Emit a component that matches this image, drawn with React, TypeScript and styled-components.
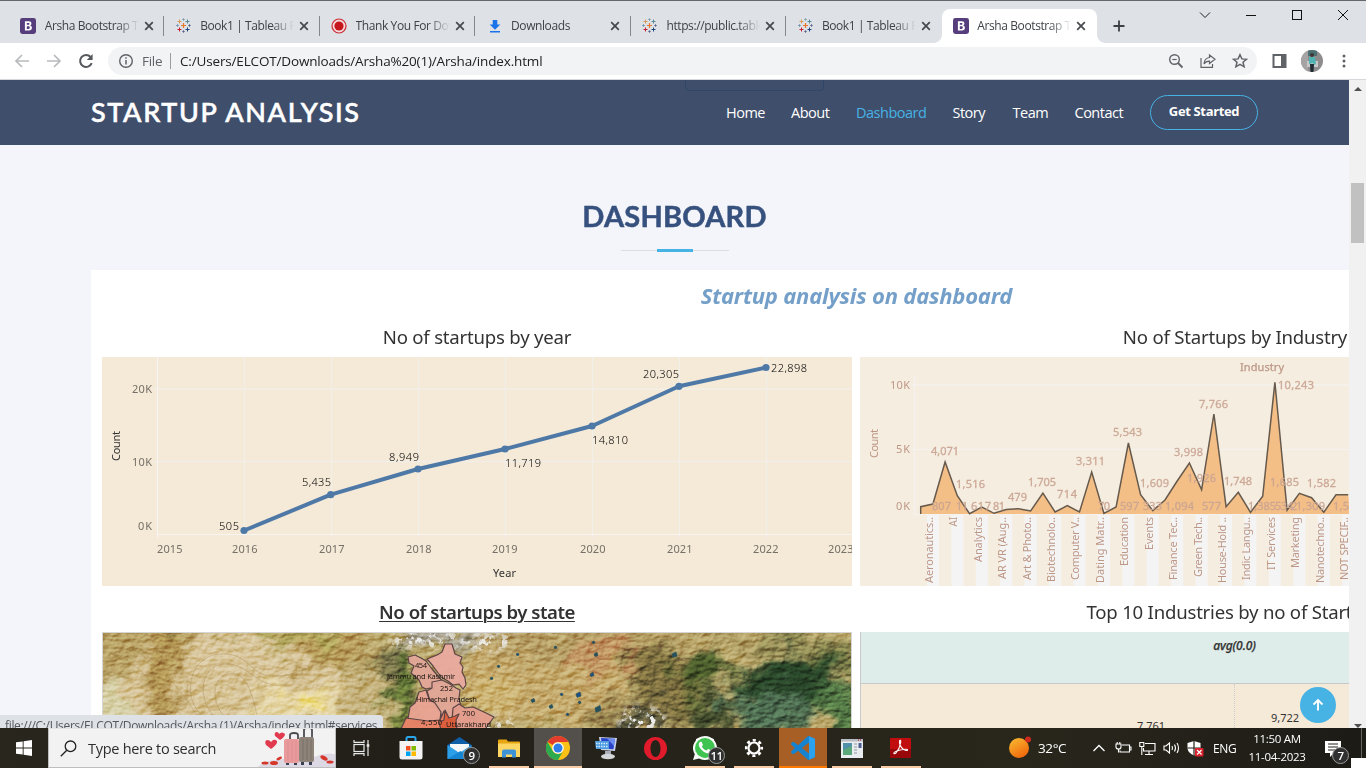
import React from "react";
import styled, { createGlobalStyle } from "styled-components";
import { FaWhatsapp } from "react-icons/fa";

const UI = `"Open Sans", "Noto Sans", sans-serif`;
const TAB = `"Noto Sans", "Open Sans", sans-serif`;

const Global = createGlobalStyle`
  * { box-sizing: border-box; }
  body { margin: 0; background: #fff; font-family: ${UI}; overflow: hidden; }
  svg { display: block; flex: none; }
`;

const Screen = styled.div`
  width: 1366px;
  height: 768px;
  display: flex;
  flex-direction: column;
  overflow: hidden;
`;

/* ---------- browser chrome ---------- */

const TabStrip = styled.div`
  height: 43px;
  flex: none;
  display: flex;
  align-items: flex-end;
  background: #dee1e6;
  border-top: 1px solid #66676a;
  padding-left: 9px;
`;

const Tab = styled.div<{ $active?: boolean; $line?: boolean }>`
  position: relative;
  width: 155.45px;
  height: 34px;
  display: flex;
  align-items: center;
  padding: 0 10px 0 11.4px;
  border-radius: 8px 8px 0 0;
  background: ${(p) => (p.$active ? "#fff" : "transparent")};
  &::after {
    content: "";
    position: absolute;
    right: 0;
    top: 7px;
    width: 1px;
    height: 20px;
    background: ${(p) => (p.$line ? "#84878b" : "transparent")};
  }
`;

const TabTitle = styled.span`
  width: 95px;
  margin: 0 4px 0 8.3px;
  overflow: hidden;
  white-space: nowrap;
  font-size: 12px;
  line-height: 18px;
  letter-spacing: -0.4px;
  color: #3f4246;
  mask-image: linear-gradient(90deg, #000 72px, transparent 94px);
`;

const TabFoot = styled.i<{ $side: "left" | "right" }>`
  position: absolute;
  bottom: 0;
  ${(p) => p.$side}: -8px;
  width: 8px;
  height: 8px;
  background: radial-gradient(circle at ${(p) => (p.$side === "left" ? "0 0" : "100% 0")}, transparent 7.5px, #fff 8px);
`;

const NewTab = styled.div`
  height: 34px;
  margin-left: 16px;
  display: flex;
  align-items: center;
`;

const WindowButtons = styled.div`
  margin-left: auto;
  align-self: flex-start;
  display: flex;
  align-items: center;
  height: 28px;
  gap: 34px;
  padding-right: 17px;
`;

const Toolbar = styled.div`
  height: 37px;
  flex: none;
  display: flex;
  align-items: center;
  background: #fff;
  border-bottom: 1px solid #d6d8db;
  padding: 0 14px;
`;

const NavButtons = styled.div`
  display: flex;
  gap: 16px;
  margin-right: 14px;
`;

const Omnibox = styled.div`
  width: 1150px;
  height: 28px;
  border-radius: 14px;
  background: #f1f3f4;
  display: flex;
  align-items: center;
  padding: 0 9px 0 10px;
`;

const UrlScheme = styled.span`
  margin-left: 8px;
  padding-right: 8px;
  width: 29px;
  font-size: 13.5px;
  line-height: 16px;
  color: #5f6368;
  white-space: nowrap;
  letter-spacing: -0.3px;
  border-right: 1px solid #9a9da1;
`;

const Url = styled.span`
  margin-left: 9px;
  font-size: 13.5px;
  line-height: 18px;
  letter-spacing: -0.16px;
  color: #202124;
  white-space: nowrap;
`;

const OmniActions = styled.div`
  margin-left: auto;
  display: flex;
  align-items: center;
  gap: 16px;
`;

const BarActions = styled.div`
  display: flex;
  align-items: center;
  margin-left: 15px;
`;

const Avatar = styled.div`
  width: 22px;
  height: 22px;
  margin: 0 13.5px;
  border-radius: 50%;
  overflow: hidden;
`;

/* ---------- page ---------- */

const Viewport = styled.div`
  position: relative;
  height: 648px;
  flex: none;
  display: flex;
`;

const Page = styled.div`
  width: 1349px;
  height: 648px;
  flex: none;
  overflow: hidden;
  background: #f3f5fa;
  display: flex;
  flex-direction: column;
`;

const Header = styled.header`
  position: relative;
  height: 65px;
  flex: none;
  display: flex;
  align-items: center;
  justify-content: space-between;
  background: #3f4e6b;
  padding: 0 91px;
`;

const GhostButton = styled.div`
  position: absolute;
  left: 685px;
  top: -20px;
  width: 139px;
  height: 31px;
  border: 1px solid #2f4668;
  border-radius: 4px;
  clip-path: inset(20px 0 0 0);
`;

const Brand = styled.h1`
  margin: 0;
  padding-bottom: 2px;
  font: 500 27px/35px Lato, sans-serif;
  -webkit-text-stroke: 0.6px #fff;
  letter-spacing: 1.65px;
  color: #fff;
  white-space: nowrap;
`;

const Nav = styled.nav`
  display: flex;
  align-items: center;
`;

const NavLink = styled.a<{ $active?: boolean; $w: number }>`
  width: ${(p) => p.$w}px;
  margin-right: 26.5px;
  font-size: 14.5px;
  line-height: 20px;
  font-weight: 500;
  letter-spacing: -0.5px;
  white-space: nowrap;
  color: ${(p) => (p.$active ? "#47b2e4" : "#fff")};
`;

const StartButton = styled.a`
  width: 108px;
  height: 35px;
  display: flex;
  justify-content: center;
  padding-top: 5px;
  border: 1px solid #47b2e4;
  border-radius: 18px;
  color: #fff;
  font-size: 13px;
  line-height: 20px;
  font-weight: 700;
  letter-spacing: -0.35px;
  white-space: nowrap;
`;

const SectionTitle = styled.div`
  height: 125px;
  flex: none;
  display: flex;
  flex-direction: column;
  align-items: center;
  padding-top: 51px;
`;

const SectionHeading = styled.h2`
  margin: 0;
  font: 700 29px/40px Lato, sans-serif;
  -webkit-text-stroke: 0.5px #37517e;
  letter-spacing: 0.2px;
  color: #37517e;
`;

const Rule = styled.div`
  width: 108px;
  height: 3px;
  margin-top: 13px;
  display: flex;
  justify-content: center;
  background: linear-gradient(#ddd, #ddd) 0 1px / 100% 1px no-repeat;
  &::after {
    content: "";
    width: 36px;
    height: 3px;
    background: #47b2e4;
  }
`;

const Embed = styled.div`
  width: 1532px;
  margin-left: 91px;
  padding: 0 12px 0 11px;
  background: #fff;
  flex: 1;
  font-family: ${TAB};
`;

const EmbedTitle = styled.h3`
  margin: 0;
  height: 52px;
  text-align: center;
  font: italic 700 22px/51px ${TAB};
  letter-spacing: -0.2px;
  color: #739fc8;
`;

const Sheets = styled.div`
  display: grid;
  grid-template-columns: 750px 750px;
  column-gap: 8px;
`;

const SheetTitle = styled.h4<{ $tall?: boolean; $strong?: boolean }>`
  margin: 0;
  height: ${(p) => (p.$tall ? 46 : 35)}px;
  text-align: center;
  font-family: ${TAB};
  font-size: 18.6px;
  line-height: ${(p) => (p.$tall ? 52 : 29)}px;
  font-weight: ${(p) => (p.$strong ? 600 : 400)};
  letter-spacing: ${(p) => (p.$strong ? -0.5 : -0.22)}px;
  text-decoration: ${(p) => (p.$strong ? "underline" : "none")};
  text-underline-offset: 2px;
  text-decoration-thickness: 1px;
  color: #333;
  white-space: nowrap;
`;

const MapFrame = styled.div`
  height: 96px;
  border: 1px solid #d5d5d5;
  border-bottom: 0;
  overflow: hidden;
`;

const Table = styled.div`
  height: 96px;
  border-left: 1px solid #c9c9c9;
  background: #f5e9d7;
`;

const TableHead = styled.div`
  height: 52px;
  background: #dfedea;
  border-bottom: 1px solid #c5c9c8;
  text-align: center;
  font: italic 500 12px/28px ${TAB};
  -webkit-text-stroke: 0.25px #333;
  letter-spacing: -0.1px;
  padding-right: 2px;
  color: #333;
`;

const TableBody = styled.div`
  display: grid;
  grid-template-columns: 373px 1fr;
  font-size: 11px;
  line-height: 14px;
  color: #333;
`;

const Cell = styled.div<{ $top: number; $left: number }>`
  height: 44px;
  padding: ${(p) => p.$top}px 0 0 ${(p) => p.$left}px;
  overflow: hidden;
  & + & {
    border-left: 1px dotted #ccc;
  }
`;

const BackToTop = styled.a`
  position: absolute;
  left: 1300px;
  top: 607px;
  width: 36px;
  height: 36px;
  border-radius: 50%;
  background: #47b2e4;
  display: flex;
  align-items: center;
  justify-content: center;
`;

const StatusBubble = styled.div`
  position: absolute;
  left: 0;
  bottom: 0;
  width: 383px;
  height: 13px;
  overflow: hidden;
  padding-left: 5px;
  background: #dee1e6;
  border-top-right-radius: 4px;
  font-size: 12px;
  line-height: 22px;
  letter-spacing: -0.33px;
  white-space: nowrap;
  color: #55585c;
`;

const Scrollbar = styled.div`
  width: 17px;
  height: 648px;
  background: #f1f1f1;
  display: flex;
  flex-direction: column;
  align-items: center;
  padding: 7px 0 0;
`;

const Thumb = styled.div`
  width: 13px;
  height: 61px;
  margin: 92px 0 481px;
  background: #c1c1c1;
`;

const Arrow = styled.i<{ $down?: boolean }>`
  border: 4px solid transparent;
  border-top: ${(p) => (p.$down ? "4px solid #505050" : "0")};
  border-bottom: ${(p) => (p.$down ? "0" : "4px solid #505050")};
`;

/* ---------- taskbar ---------- */

const Taskbar = styled.div`
  position: relative;
  height: 40px;
  flex: none;
  display: flex;
  color: #fff;
  background: linear-gradient(90deg, #29261e, #211f18 30%, #27241b 55%, #29271c 75%, #1d1b16);
`;

const StartCell = styled.div`
  width: 48px;
  display: flex;
  align-items: center;
  justify-content: center;
`;

const Search = styled.div`
  width: 288px;
  height: 40px;
  display: flex;
  align-items: center;
  background: #f2f2f2;
  border: 1px solid #bdbdbd;
  border-top-color: #e4e4e4;
  padding-left: 11px;
  overflow: hidden;
`;

const SearchText = styled.span`
  width: 170px;
  flex: none;
  margin-left: 11px;
  font-size: 14.5px;
  letter-spacing: -0.28px;
  white-space: nowrap;
  color: #2e2e2e;
`;

const App49 = styled.div<{ $bg?: string; $bar?: string; $full?: boolean; $wide?: boolean }>`
  position: relative;
  width: ${(p) => (p.$wide ? 50 : 49)}px;
  height: 40px;
  display: flex;
  align-items: center;
  justify-content: center;
  background: ${(p) => (p.$bg ? `linear-gradient(${p.$bg}, ${p.$bg}) center / 48px 100% no-repeat` : "none")};
  &::after {
    content: "";
    position: absolute;
    bottom: 0;
    left: ${(p) => (p.$full ? 1 : 5)}px;
    right: ${(p) => (p.$full ? 0 : 4)}px;
    height: 2px;
    background: ${(p) => p.$bar || "transparent"};
  }
`;

const Badge = styled.span<{ $x: number; $y: number }>`
  position: absolute;
  left: ${(p) => p.$x}px;
  top: ${(p) => p.$y}px;
  width: 17px;
  height: 17px;
  border-radius: 50%;
  border: 1px solid #9a9a9a;
  background: #303030;
  font-size: 11.5px;
  font-weight: 600;
  line-height: 15px;
  text-align: center;
  letter-spacing: -0.5px;
  color: #fff;
`;

const Tray = styled.div`
  margin-left: auto;
  display: flex;
  align-items: center;
  padding-right: 25px;
`;

const TrayText = styled.span<{ $w: number; $ml: number; $size: number }>`
  width: ${(p) => p.$w}px;
  margin-left: ${(p) => p.$ml}px;
  font-size: ${(p) => p.$size}px;
  letter-spacing: -0.4px;
  white-space: nowrap;
`;

const TrayIcon = styled.span<{ $ml: number }>`
  margin-left: ${(p) => p.$ml}px;
  position: relative;
`;

const Clock = styled.div`
  width: 60px;
  margin-left: 10px;
  text-align: center;
  font-size: 11.5px;
  line-height: 18px;
  letter-spacing: -0.3px;
  white-space: nowrap;
`;

const DesktopPeek = styled.div`
  position: absolute;
  right: 0;
  bottom: 0;
  width: 15px;
  height: 10px;
  background: #fff;
`;

const PeekLine = styled.i`
  position: absolute;
  right: 4px;
  top: 0;
  width: 1px;
  height: 30px;
  background: #66645e;
`;

/* ---------- small drawings ---------- */

const BootstrapIcon = () => (
  <svg width="16" height="16" viewBox="0 0 16 16">
    <rect width="16" height="16" rx="2.4" fill="#563d7c" />
    <path d="M4.900 3.300h3.900c1.700 0 2.600.8 2.600 2.200 0 1-.5 1.700-1.400 2 1.200.2 1.900 1 1.900 2.200 0 1.800-1.100 2.800-3 2.800H4.900z M6.800 4.900v1.900h1.500c.8 0 1.200-.3 1.200-.95s-.4-.95-1.200-.95z M6.800 8.300v2.600h1.700c.9 0 1.300-.4 1.300-1.300s-.5-1.300-1.400-1.300z" fill="#fff" fillRule="evenodd" />
  </svg>
);

const Plus = ({ x, y, r, c, w = 1 }: { x: number; y: number; r: number; c: string; w?: number }) => (
  <path d={`M${x - r} ${y}h${2 * r}M${x} ${y - r}v${2 * r}`} stroke={c} strokeWidth={w} />
);

const TableauIcon = () => (
  <svg width="16" height="16" viewBox="0 0 16 16">
    <Plus x={7.500} y={7.500} r={2.500} c="#e8762c" w={1.200} />
    <Plus x={3.500} y={3.500} r={2} c="#d89a5a" />
    <Plus x={11.500} y={3.500} r={2} c="#5b8a96" />
    <Plus x={3.500} y={11.500} r={2} c="#c72035" />
    <Plus x={11.500} y={11.500} r={2} c="#1f457e" />
    <Plus x={7.500} y={1.500} r={1.200} c="#7b9fae" />
    <Plus x={7.500} y={13.500} r={1.200} c="#5a6591" />
    <Plus x={1.500} y={7.500} r={1.200} c="#6a8eaa" />
    <Plus x={13.500} y={7.500} r={1.200} c="#5a6591" />
  </svg>
);

const RecordIcon = () => (
  <svg width="16" height="16" viewBox="0 0 16 16">
    <circle cx="8" cy="8" r="7" fill="#f6dadc" stroke="#cb2b33" strokeWidth="1.200" />
    <circle cx="8" cy="8" r="4.600" fill="#c4161c" />
  </svg>
);

const DownloadIcon = () => (
  <svg width="16" height="16" viewBox="0 0 16 16">
    <path d="M5.700 2h4.600v4.500h3L8 11.700 2.700 6.500h3zM3 13.100h10v1.500H3z" fill="#1a73e8" />
  </svg>
);

const CloseIcon = () => (
  <svg width="10" height="10" viewBox="0 0 10 10">
    <path d="M1.200 1.200l7.600 7.600M8.800 1.200L1.200 8.800" stroke="#45484c" strokeWidth="1.700" />
  </svg>
);

const icons = { boot: BootstrapIcon, tableau: TableauIcon, record: RecordIcon, download: DownloadIcon };

const tabs: { icon: keyof typeof icons; title: string }[] = [
  { icon: "boot", title: "Arsha Bootstrap Template" },
  { icon: "tableau", title: "Book1 | Tableau Public" },
  { icon: "record", title: "Thank You For Downloading" },
  { icon: "download", title: "Downloads" },
  { icon: "tableau", title: "https://public.tableau.com" },
  { icon: "tableau", title: "Book1 | Tableau Public" },
  { icon: "boot", title: "Arsha Bootstrap Template" },
];

/* ---------- line chart ---------- */

const yearPoints: [number, number][] = [
  [142, 173.5], [228.700, 137.700], [316, 112], [403, 92], [490, 69], [577, 29.300], [664, 10.500],
];
const yearLabels: [string, number, number, number][] = [
  ["505", 117, 173, 20], ["5,435", 200, 129, 29], ["8,949", 287, 104, 30], ["11,719", 403, 110, 36],
  ["14,810", 490, 87, 36], ["20,305", 541, 21, 36], ["22,898", 669, 15, 36],
];
const years: [string, number][] = [
  ["2015", 55], ["2016", 130], ["2017", 217], ["2018", 304], ["2019", 390], ["2020", 478], ["2021", 565], ["2022", 651], ["2023", 726],
];

const YearChart = () => (
  <svg width="750" height="229" viewBox="0 0 750 229" fontFamily={TAB} fontSize="11">
    <rect width="750" height="229" fill="#f5e9d7" />
    <g stroke="#f2eee8" strokeWidth="1.300">
      {[142, 229, 316, 403, 490, 577, 664].map((x) => <path key={x} d={`M${x + 0.5} 0V181`} />)}
      <path d="M52 32H750M52 104.500H750" />
    </g>
    <path d="M55.500 0V181M55 177.500H750" stroke="#f6f5f3" strokeWidth="1.200" fill="none" />
    <polyline points={yearPoints.map((p) => p.join()).join(" ")} fill="none" stroke="#4e79a7" strokeWidth="4" strokeLinejoin="round" />
    {yearPoints.map(([x, y]) => <circle key={x} cx={x} cy={y} r="3.600" fill="#4e79a7" />)}
    <g fill="#000" fontWeight="300">
      {yearLabels.map(([t, x, y, w]) => <text key={t} x={x} y={y} textLength={w}>{t}</text>)}
    </g>
    <g fill="#757068">
      <text x="30" y="36" textLength="20">20K</text>
      <text x="30" y="109" textLength="20">10K</text>
      <text x="36" y="173" textLength="14">0K</text>
      {years.map(([t, x]) => <text key={t} x={x} y="196" textLength="25.500">{t}</text>)}
    </g>
    <text x="391" y="220" textLength="23" fill="#333">Year</text>
    <text transform="translate(18 104) rotate(-90)" textLength="30" fill="#333">Count</text>
  </svg>
);

/* ---------- area chart ---------- */

const areaY = [
  149.700, 147, 105, 138.700, 156.700, 150, 156.300, 152.500, 151.700, 154, 136, 155, 148.700, 155, 115, 156.300, 150, 86, 137.700,
  153.700, 143, 124, 106, 132.700, 57, 149.700, 135.300, 155.300, 139.300, 25.300, 153.300, 136.300, 140.700, 155.300, 137.700, 137.700,
];
const areaLine = areaY.map((y, i) => `${(60.700 + i * 12.215).toFixed(1)},${y}`).join(" ");
const areaValues: [string, number, number, number][] = [
  ["4,071", 71, 98, 28], ["1,516", 96, 131, 29], ["807", 72, 153, 19], ["11", 96, 153, 12], ["617", 111, 153, 20], ["81", 133, 153, 12],
  ["479", 148, 144, 19], ["1,705", 168, 129, 28], ["714", 197, 141, 20], ["3,311", 216, 108, 29], ["70", 238, 153, 12],
  ["5,543", 253, 79, 29], ["597", 260, 153, 19], ["1,609", 280, 130, 29], ["333", 283, 153, 19], ["1,094", 305, 153, 29],
  ["3,998", 314, 99, 29], ["1,926", 327, 125, 29], ["577", 342, 153, 19], ["7,766", 339, 51, 29], ["1,748", 364, 128, 28],
  ["1,385", 388, 153, 28], ["534", 415, 153, 18], ["2", 431, 153, 6], ["1,309", 436, 153, 29], ["1,685", 410, 129, 29], ["10,243", 418, 32, 36],
  ["1,582", 447, 130, 29], ["1,529", 473, 153, 29],
];
const industries: [string, number][] = [
  ["Aeronautics..", 66], ["AI", 9.500], ["Analytics", 45], ["AR VR (Aug..", 62], ["Art & Photo..", 63], ["Biotechnolo..", 65],
  ["Computer V..", 63], ["Dating Matr..", 66], ["Education", 49], ["Events", 33], ["Finance Tec..", 63], ["Green Tech..", 60],
  ["House-Hold ..", 66], ["Indic Langu..", 63], ["IT Services", 53], ["Marketing", 51], ["Nanotechno..", 66], ["NOT SPECIF..", 63],
];

const IndustryChart = () => (
  <svg width="750" height="229" viewBox="0 0 750 229" fontFamily={TAB} fontSize="11">
    <rect width="750" height="229" fill="#f6ede1" />
    {industries.map(([t], i) => <rect key={t} x={67 + i * 24.420} y="158" width="12" height="71" fill="#f5f4f4" />)}
    <path d="M54.500 18V158M52 28H750M52 92.500H750M54 157.500H750" stroke="#f4f3f1" fill="none" />
    <polygon points={`60.700,157 ${areaLine} 490,157`} fill="#f4be87" />
    <polyline points={`60.700,157 ${areaLine}`} fill="none" stroke="#665a4c" strokeWidth="1.500" />
    <g fill="#caa592" stroke="#caa592" strokeWidth="0.300" fillOpacity="0.900">
      {areaValues.map(([t, x, y, w]) => <text key={t + x} x={x} y={y} textLength={w}>{t}</text>)}
    </g>
    <g fill="#bd9785">
      <text x="380" y="14" textLength="44" stroke="#bd9785" strokeWidth="0.250">Industry</text>
      <text x="30" y="32" textLength="20">10K</text>
      <text x="36" y="96" textLength="14">5K</text>
      <text x="36" y="153" textLength="14">0K</text>
      <text transform="translate(18 101) rotate(-90)" textLength="29">Count</text>
      {industries.map(([t, w], i) => (
        <text key={t} transform={`translate(${72.900 + i * 24.420} ${160 + w}) rotate(-90)`} textLength={w} lengthAdjust={w < 20 ? "spacingAndGlyphs" : "spacing"}>{t}</text>
      ))}
    </g>
  </svg>
);

/* ---------- satellite map ---------- */

const land: [number, number, number, number, string, number][] = [
  [30, 40, 90, 60, "#b79f62", 1], [14, 80, 40, 30, "#d6cfa6", 1], [130, 55, 110, 55, "#d5c193", 1], [52, 0, 14, 5, "#3d4a24", 1],
  [60, 40, 14, 44, "#a88843", 0.800], [150, 20, 60, 20, "#d8c59a", 1], [200, 6, 46, 12, "#aaa052", 0.900], [240, 22, 60, 12, "#b79c5c", 1],
  [190, 78, 56, 26, "#e3d3a2", 1], [205, 72, 16, 10, "#eedc85", 1], [265, 70, 26, 30, "#c4b07a", 1], [290, 26, 24, 18, "#77734a", 1],
  [306, 55, 15, 28, "#5c7034", 1], [298, 85, 20, 18, "#78843f", 1], [350, 5, 55, 10, "#a29c8c", 1], [400, 8, 40, 9, "#bdb194", 1],
  [440, 45, 84, 50, "#c4a96c", 1], [470, 12, 90, 16, "#b59d64", 1], [510, 28, 50, 12, "#c0925f", 1], [390, 70, 26, 18, "#cbb170", 1],
  [380, 92, 18, 6, "#5e6040", 1], [565, 50, 36, 34, "#7e7040", 1], [520, 86, 44, 16, "#94804c", 1], [600, 38, 32, 26, "#4b5c2c", 1],
  [570, 4, 50, 8, "#b29c62", 1], [650, 6, 40, 10, "#ad9b62", 1], [700, 12, 50, 10, "#8a8550", 1], [690, 52, 56, 26, "#284428", 1],
  [668, 78, 44, 20, "#4d6c50", 1], [735, 76, 20, 30, "#527644", 1], [610, 85, 22, 20, "#434d2d", 1], [545, 86, 24, 12, "#55543c", 1],
  [735, 26, 30, 6, "#5b6638", 1],
];
const lakes: [number, number, number][] = [
  [474, 62, 4], [447, 74, 3], [493, 76, 5], [488, 42, 3], [395, 34, 2], [429, 68, 3], [458, 62, 2], [492, 22, 3], [570, 22, 4],
  [414, 22, 2], [452, 15, 2], [476, 70, 2], [464, 82, 2], [490, 10, 2], [388, 46, 2],
];

const StateMap = () => (
  <svg width="748" height="96" viewBox="1 1 748 96" fontFamily={TAB} fontSize="7.500">
    <defs>
      <filter id="soft" x="-10%" y="-40%" width="120%" height="180%" colorInterpolationFilters="sRGB">
        <feGaussianBlur stdDeviation="5" result="b" />
        <feTurbulence type="fractalNoise" baseFrequency="0.03" numOctaves="5" seed="4" />
        <feDisplacementMap in="b" scale="55" xChannelSelector="R" yChannelSelector="G" />
      </filter>
      <filter id="relief" x="0" y="0" width="100%" height="100%" colorInterpolationFilters="sRGB">
        <feTurbulence type="fractalNoise" baseFrequency="0.1 0.16" numOctaves="4" seed="11" />
        <feDiffuseLighting lightingColor="#fff" surfaceScale="2.6">
          <feDistantLight azimuth="235" elevation="50" />
        </feDiffuseLighting>
        <feColorMatrix values="1 0 0 0 -.24  1 0 0 0 -.24  1 0 0 0 -.24  0 0 0 0 1" />
      </filter>
      <filter id="snow" x="-10%" y="-30%" width="120%" height="160%" colorInterpolationFilters="sRGB">
        <feTurbulence type="fractalNoise" baseFrequency="0.15" numOctaves="4" seed="7" />
        <feColorMatrix values="0 0 0 0 .93  0 0 0 0 .93  0 0 0 0 .93  7 5 0 0 -6.100" result="n" />
        <feGaussianBlur in="SourceAlpha" stdDeviation="4" />
        <feComposite in="n" operator="in" />
      </filter>
    </defs>
    <rect width="750" height="98" fill="#bba86c" />
    <g filter="url(#soft)">
      {land.map(([x, y, rx, ry, c, o], i) => <ellipse key={i} cx={x} cy={y} rx={rx} ry={ry} fill={c} opacity={o} />)}
    </g>
    <rect width="750" height="98" filter="url(#relief)" style={{ mixBlendMode: "overlay" }} opacity="0.550" />
    <g filter="url(#snow)">
      <ellipse cx="325" cy="8" rx="38" ry="9" />
      <ellipse cx="385" cy="10" rx="28" ry="8" />
      <ellipse cx="540" cy="88" rx="24" ry="13" />
      <ellipse cx="395" cy="92" rx="20" ry="7" />
    </g>
    <g fill="none" stroke="#9a7a42" strokeOpacity="0.300">
      <path d="M105 88C78 70 85 24 118 22s28 26 60 22 60-30 90-22" />
      <path d="M118 90C94 72 96 34 122 32s34 28 64 20" />
      <path d="M130 92C108 76 108 46 126 42s24 18 30 46" />
      <path d="M10 20c30 14 50 40 76 72M20 12c30 14 56 38 80 80" />
    </g>
    {lakes.map(([x, y, s], i) => <path key={i} d={`M${x} ${y}l${s} -${s / 2} 1 ${s}-${s} ${s / 3}z`} fill={i % 3 ? "#25505c" : "#1c4f86"} stroke="#25505c" strokeWidth="0.700" />)}
    <g stroke="#5a4444" strokeWidth="1.200" strokeLinejoin="round">
      <path fill="#e3a698" fillOpacity="0.950" d="M306 25l7-2 6 3 5 3 6 8 6 7 5 6-8 2-1 6-4-2-4 1-4-2-3-7-8-7 3-7-5-3z" />
      <path fill="#e9aa9f" fillOpacity="0.950" d="M325 27l10-4 5-3 3-8h7l3 10 7 3-2 6 3 4-1 5 3 6 1 7-3 4-4-5-6 1-5-4-7-4-8-11z" />
      <path fill="#e3a698" fillOpacity="0.950" d="M330 50l10-2 8 4 6 4 4 2-1 8 2 9-7 3-1 5 1 5-8 3-5-9-6-9-5-4-3-10 5-3z" />
      <path fill="#eaa393" fillOpacity="0.950" d="M317 60l7-2 3 9 6 4 6 9-1 8-10 3-22-4 2-12 5-4z" />
      <path fill="#e59d8e" fillOpacity="0.950" d="M351 76l6-4 6 4 8-1 13 6 8 4-6 8-4 6h-28l-4-11z" />
      <path fill="#ea8267" fillOpacity="0.960" d="M304 86l22 3 12-1 4-9 5 8 4 2-3 10h-50z" />
      <path fill="#dc5d3a" fillOpacity="0.960" d="M343 78l4 8 6-2 4-2-3 6 1 10h-16l-2-8 5-2z" />
    </g>
    <g fill="#1c1612">
      <text x="313" y="36" textLength="12">454</text>
      <text x="285" y="47" textLength="68">Jammu and Kashmir</text>
      <text x="338" y="59" textLength="13">252</text>
      <text x="314" y="70" textLength="61">Himachal Pradesh</text>
      <text x="360" y="84" textLength="13">700</text>
      <text x="319" y="93" textLength="21">4,550</text>
      <text x="344" y="95" textLength="45">Uttarakhand</text>
    </g>
  </svg>
);

/* ---------- app ---------- */

export default function App() {
  return (
    <Screen>
      <Global />
      <TabStrip>
        {tabs.map((t, i) => {
          const Icon = icons[t.icon];
          const active = i === 6;
          return (
            <Tab key={i} $active={active} $line={i < 5}>
              {active && <TabFoot $side="left" />}
              <Icon />
              <TabTitle>{t.title}</TabTitle>
              <CloseIcon />
              {active && <TabFoot $side="right" />}
            </Tab>
          );
        })}
        <NewTab>
          <svg width="12" height="12" viewBox="0 0 12 12"><path d="M6 .5v11M.5 6h11" stroke="#3c4043" strokeWidth="1.800" /></svg>
        </NewTab>
        <WindowButtons>
          <svg width="12" height="12" viewBox="0 0 12 12"><path d="M1 3.500l5 5 5-5" fill="none" stroke="#222" /></svg>
          <svg width="12" height="12" viewBox="0 0 12 12"><path d="M1 6.500h10" stroke="#111" /></svg>
          <svg width="12" height="12" viewBox="0 0 12 12"><rect x="1.500" y="1.500" width="9" height="9" fill="none" stroke="#111" /></svg>
          <svg width="12" height="12" viewBox="0 0 12 12"><path d="M1 1l10 10M11 1L1 11" stroke="#111" /></svg>
        </WindowButtons>
      </TabStrip>

      <Toolbar>
        <NavButtons>
          <svg width="16" height="16" viewBox="0 0 16 16"><path d="M15 8H2M8 2L2 8l6 6" fill="none" stroke="#b8babd" strokeWidth="1.700" /></svg>
          <svg width="16" height="16" viewBox="0 0 16 16"><path d="M1 8h13M8 2l6 6-6 6" fill="none" stroke="#b8babd" strokeWidth="1.700" /></svg>
          <svg width="16" height="16" viewBox="0 0 16 16">
            <path d="M13.700 10.200A6 6 0 1 1 12.600 4" fill="none" stroke="#55585c" strokeWidth="2" />
            <path d="M14.600 1v6H8.800z" fill="#55585c" />
          </svg>
        </NavButtons>
        <Omnibox>
          <svg width="16" height="16" viewBox="0 0 16 16">
            <circle cx="8" cy="8" r="6.300" fill="none" stroke="#5f6368" strokeWidth="1.400" />
            <path d="M8 7v4.500M8 4.300v1.500" stroke="#5f6368" strokeWidth="1.500" />
          </svg>
          <UrlScheme>File</UrlScheme>
          <Url>C:/Users/ELCOT/Downloads/Arsha%20(1)/Arsha/index.html</Url>
          <OmniActions>
            <svg width="16" height="16" viewBox="0 0 16 16">
              <circle cx="6.500" cy="6.500" r="4.800" fill="none" stroke="#5f6368" strokeWidth="1.400" />
              <path d="M10 10l4.500 4.500" stroke="#5f6368" strokeWidth="1.800" /><path d="M4.300 6.500h4.400" stroke="#5f6368" strokeWidth="1.200" />
            </svg>
            <svg width="16" height="16" viewBox="0 0 16 16" fill="none" stroke="#5f6368" strokeWidth="1.200">
              <path d="M1 5v9.400h11.500V11" /><path d="M9.500 2l5.500 4.300-5.500 4.200V8.200C6.800 8.200 5.200 9 4 11c.2-3.500 2-6 5.500-6.500z" />
            </svg>
            <svg width="16" height="16" viewBox="0 0 16 16">
              <path d="M8 1.700l1.900 4.200 4.600.4-3.500 3 1.100 4.500L8 11.400l-4.100 2.400L5 9.300l-3.500-3 4.600-.4z" fill="none" stroke="#5f6368" strokeWidth="1.500" />
            </svg>
          </OmniActions>
        </Omnibox>
        <BarActions>
          <svg width="15" height="16" viewBox="0 0 15 16"><path d="M.5 1h14v14H.5zM2.500 3v10h6.500V3z" fill="#5f6368" fillRule="evenodd" /></svg>
          <Avatar>
            <svg width="22" height="22" viewBox="0 0 22 22">
              <rect width="22" height="22" fill="#8f8c8d" />
              <rect width="7" height="22" fill="#a5a3a3" /><rect x="7" width="9" height="6" fill="#4c6f73" />
              <rect x="6" y="11" width="11" height="6" fill="#c8c8c8" />
              <circle cx="11" cy="5" r="2" fill="#3f3735" />
              <path d="M8 7h6l1 7-2 1-1-2-4 1z" fill="#4fb4b3" />
              <path d="M9 14h4l-.5 8h-3z" fill="#1f2a33" />
            </svg>
          </Avatar>
          <svg width="16" height="16" viewBox="0 0 16 16" fill="#5f6368">
            <circle cx="8" cy="3" r="1.500" /><circle cx="8" cy="8" r="1.500" /><circle cx="8" cy="13" r="1.500" />
          </svg>
        </BarActions>
      </Toolbar>

      <Viewport>
        <Page>
          <Header>
            <GhostButton />
            <Brand>STARTUP ANALYSIS</Brand>
            <Nav>
              <NavLink $w={38.500}>Home</NavLink>
              <NavLink $w={38.500}>About</NavLink>
              <NavLink $w={70} $active>Dashboard</NavLink>
              <NavLink $w={33.500}>Story</NavLink>
              <NavLink $w={35.500}>Team</NavLink>
              <NavLink $w={49}>Contact</NavLink>
              <StartButton>Get Started</StartButton>
            </Nav>
          </Header>
          <SectionTitle>
            <SectionHeading>DASHBOARD</SectionHeading>
            <Rule />
          </SectionTitle>
          <Embed>
            <EmbedTitle>Startup analysis on dashboard</EmbedTitle>
            <Sheets>
              <SheetTitle>No of startups by year</SheetTitle>
              <SheetTitle>No of Startups by Industry</SheetTitle>
              <YearChart />
              <IndustryChart />
              <SheetTitle $tall $strong>No of startups by state</SheetTitle>
              <SheetTitle $tall>Top 10 Industries by no of Startups</SheetTitle>
              <MapFrame><StateMap /></MapFrame>
              <Table>
                <TableHead>avg(0.0)</TableHead>
                <TableBody>
                  <Cell $top={35} $left={276}>7,761</Cell>
                  <Cell $top={27} $left={36}>9,722</Cell>
                </TableBody>
              </Table>
            </Sheets>
          </Embed>
        </Page>
        <Scrollbar>
          <Arrow />
          <Thumb />
          <Arrow $down />
        </Scrollbar>
        <BackToTop>
          <svg width="14" height="14" viewBox="0 0 14 14"><path d="M7 12.500V2M2.500 6.500L7 2l4.500 4.500" fill="none" stroke="#fff" strokeWidth="1.900" /></svg>
        </BackToTop>
        <StatusBubble>file:///C:/Users/ELCOT/Downloads/Arsha (1)/Arsha/index.html#services</StatusBubble>
      </Viewport>

      <Taskbar>
        <StartCell>
          <svg width="16" height="16" viewBox="0 0 16 16" fill="#fff"><path d="M0 2.300l6.700-.9v6.100H0zM7.600 1.300L16 .1v7.400H7.600zM0 8.400h6.700v6.200L0 13.700zM7.600 8.400H16V16l-8.400-1.200z" /></svg>
        </StartCell>
        <Search>
          <svg width="17" height="17" viewBox="0 0 17 17" fill="none" stroke="#222" strokeWidth="1.300">
            <circle cx="10.500" cy="6.300" r="5.300" /><path d="M6.800 10.200L.8 16.200" />
          </svg>
          <SearchText>Type here to search</SearchText>
          <svg width="77" height="38" viewBox="0 0 77 38">
            <path d="M0 38q8-8 22-7 20-8 34-3 12-6 24-2v12z" fill="#dcd8e4" />
            <path d="M14 18l-5-4q-2-4 1-5 3 0 4 2 3-4 6-1 1 3-6 8zM23 9l-5-4q-1-3 1-4 3 0 3 2 3-3 6 0 0 3-5 6z" fill="#e23b50" transform="translate(-1 2)" />
            <path d="M32 10V6q0-2 4-2t4 2v4M46 9V1q0-2 4-2t4 2v8" fill="none" stroke="#4b4a50" strokeWidth="1.800" />
            <rect x="26" y="10" width="15" height="24" rx="2" fill="#e99b9c" />
            <path d="M30 12v20M34 12v20M38 12v20" stroke="#dd8d90" />
            <rect x="41" y="8" width="15" height="25" rx="2" fill="#8d8378" />
            <path d="M45 10v21M49 10v21M53 10v21" stroke="#7b7168" />
            <path d="M28 34h3v2h-3zM36 34h3v2h-3zM43 33h3v3h-3zM51 33h3v3h-3z" fill="#3a4050" />
            <g fill="#d6372a"><ellipse cx="7" cy="34" rx="3.500" ry="1.500" /><ellipse cx="16" cy="34" rx="4" ry="2" /><ellipse cx="21" cy="29.500" rx="3" ry="1.400" transform="rotate(-25 21 29)" /><ellipse cx="66" cy="29" rx="4" ry="2" transform="rotate(30 66 29)" /><ellipse cx="72" cy="33" rx="3.500" ry="1.500" /></g>
          </svg>
        </Search>
        <App49 $wide>
          <svg width="17" height="16" viewBox="0 0 17 16" fill="none" stroke="#e9e9e9" strokeWidth="1.200">
            <rect x="1" y="4.500" width="10" height="7" /><path d="M1 0v2.300h10V0M1 16v-2.300h10V16M15 0v16" /><path d="M13.700 5.500h2.600" strokeWidth="2.600" />
          </svg>
        </App49>
        <App49>
          <svg width="24" height="24" viewBox="0 0 24 24">
            <path d="M7.500 6V2.500q0-1.500 1.500-1.500h6q1.500 0 1.500 1.500V6" fill="none" stroke="#29a7ea" strokeWidth="2" />
            <path d="M.5 5h23v16q0 2.500-2.500 2.500H3Q.5 23.500.5 21z" fill="#f3f3f3" />
            <path d="M7 10h4.500v4.500H7z" fill="#f25022" /><path d="M12.500 10H17v4.500h-4.500z" fill="#7fba00" /><path d="M7 15.500h4.500V20H7z" fill="#00a4ef" /><path d="M12.500 15.500H17V20h-4.500z" fill="#ffb900" />
          </svg>
        </App49>
        <App49>
          <svg width="25" height="24" viewBox="0 0 25 24">
            <path d="M.5 9L12.500 1l12 8v14H.5z" fill="#0f5fa8" /><path d="M3 8h19v10H3z" fill="#f5f6f8" /><path d="M.5 9l12 8 12-8v14H.5z" fill="#2ba0e8" /><path d="M.5 23l13-8 11 8z" fill="#1685d3" />
          </svg>
          <Badge $x={28} $y={19}>9</Badge>
        </App49>
        <App49 $bar="#f9cba5">
          <svg width="22" height="19" viewBox="0 0 22 19">
            <path d="M0 1.500Q0 .5 1 .5h7.500l1.500 2h11q1 0 1 1V17H0z" fill="#e8a613" /><path d="M0 4.500h22V18H0z" fill="#fdd663" />
            <path d="M4 18.500v-6q0-2 2-2h10q2 0 2 2v6h-4v-3H8v3z" fill="#3d93d6" />
          </svg>
        </App49>
        <App49 $bg="#53504b" $bar="#f9cba5" $full>
          <svg width="24" height="24" viewBox="0 0 24 24">
            <circle cx="12" cy="12" r="12" fill="#fbc116" />
            <path d="M1.600 6A12 12 0 0 1 22.400 6H12a6 6 0 0 0-5.200 3z" fill="#e33b2e" />
            <path d="M1.600 6A12 12 0 0 0 12 24l5.200-9a6 6 0 0 1-10.400 0z" fill="#2da94f" />
            <circle cx="12" cy="12" r="5.800" fill="#fff" /><circle cx="12" cy="12" r="4.500" fill="#2f7de9" />
          </svg>
        </App49>
        <App49>
          <svg width="24" height="24" viewBox="0 0 24 24">
            <path d="M4 1l18 1-2 13-14-1z" fill="#c9d2e8" /><path d="M6 2l14 .800-1.500 10.500L7 12.500z" fill="#2843c7" /><path d="M12 2.500l8 .500-1 7z" fill="#6d8df0" />
            <path d="M0 5h14v8H1z" fill="#4d9be0" /><path d="M1 7.500h12M1 10.500h12" stroke="#d6ecff" strokeDasharray="1.500 1" strokeWidth="1.300" />
            <path d="M10 15h6v3h-6z" fill="#a9adb5" /><ellipse cx="13" cy="20.500" rx="7" ry="2.800" fill="#d4d6da" />
          </svg>
        </App49>
        <App49>
          <svg width="23" height="23" viewBox="0 0 23 23"><path d="M11.500 0a11.500 11.500 0 1 0 0 23 11.500 11.500 0 0 0 0-23zm0 3c3 0 5 3.700 5 8.500s-2 8.500-5 8.500-5-3.700-5-8.500 2-8.500 5-8.500z" fill="#e01b2b" fillRule="evenodd" /></svg>
        </App49>
        <App49 $bar="#f9cba5">
          <svg width="24" height="24" viewBox="0 0 24 24">
            <path d="M12 0A12 12 0 0 0 1.800 18.200L0 24l6-1.600A12 12 0 1 0 12 0z" fill="#f4fbf5" /><circle cx="12" cy="12" r="10" fill="#3fc351" />
            <FaWhatsapp x={3} y={2.500} size={18} color="#fff" viewBox="60 90 330 330" />
          </svg>
          <Badge $x={28} $y={19}>11</Badge>
        </App49>
        <App49 $bar="#f9cba5">
          <svg width="20" height="20" viewBox="0 0 20 20">
            <circle cx="10" cy="10" r="5.500" fill="none" stroke="#fff" strokeWidth="2.200" />
            <circle cx="10" cy="10" r="7.800" fill="none" stroke="#fff" strokeWidth="2.600" strokeDasharray="3.060 3.066" strokeDashoffset="1.500" />
          </svg>
        </App49>
        <App49 $bg="#a85f26" $bar="#ff7800" $full>
          <svg width="24" height="24" viewBox="0 0 24 24">
            <path d="M23.150 2.587L18.210.21a1.494 1.494 0 0 0-1.705.29l-9.460 8.630-4.120-3.128a.999.999 0 0 0-1.276.057L.327 7.261A1 1 0 0 0 .326 8.740L3.899 12 .326 15.260a1 1 0 0 0 .001 1.479L1.650 17.940a.999.999 0 0 0 1.276.057l4.120-3.128 9.460 8.630a1.492 1.492 0 0 0 1.704.29l4.942-2.377A1.500 1.500 0 0 0 24 20.060V3.939a1.500 1.500 0 0 0-.850-1.352zm-5.146 14.861L10.826 12l7.178-5.448v10.896z" fill="#1583cf" />
            <path d="M18 .2l5.200 2.400q.8.500.8 1.400v16q0 .9-.8 1.400L18 23.800z" fill="#2ba2ef" />
          </svg>
        </App49>
        <App49 $bar="#f9cba5">
          <svg width="22" height="19" viewBox="0 0 22 19">
            <path d="M0 0h22v19H0z" fill="#e9edf0" /><path d="M0 0h22v2.500H0z" fill="#b9bdc2" /><path d="M17 .6h1v1h-1zM19 .6h1v1h-1z" fill="#b02" />
            <path d="M2 4h9v12H2z" fill="#4f8fa8" /><path d="M2 11l9-4v9H2z" fill="#5aa77a" /><path d="M13 5h3M13 8h3M13 11h3M13 14h3" stroke="#8e969c" /><path d="M17.500 4h3v5h-3z" fill="#4b5f93" />
          </svg>
        </App49>
        <App49 $bar="#f9cba5">
          <svg width="21" height="20" viewBox="0 0 21 20">
            <rect width="21" height="20" rx="1" fill="#c20d0f" /><rect y="11" width="21" height="9" fill="#98080a" />
            <path d="M4 15.500q-1-1.500 6-3.500 8-1.500 7.500 0-.500 1.500-4.500-1-4-3.500-3.500-8 1.500-2 1.200 1.500Q9.500 11 6 15q-1.500 1-2 .5z" fill="none" stroke="#fff" strokeWidth="1.100" />
          </svg>
        </App49>
        <Tray>
          <TrayIcon $ml={0}>
            <svg width="23" height="24" viewBox="0 0 23 24">
              <defs><linearGradient id="sun" x1="0" y1="0" x2="0.600" y2="1"><stop stopColor="#f9bf33" /><stop offset="1" stopColor="#f0690c" /></linearGradient></defs>
              <circle cx="10" cy="12" r="10" fill="url(#sun)" /><circle cx="19" cy="3.500" r="3" fill="#cc2a1c" />
            </svg>
          </TrayIcon>
          <TrayText $w={30} $ml={6} $size={13.500}>32°C</TrayText>
          <TrayIcon $ml={24}><svg width="14" height="12" viewBox="0 0 14 12"><path d="M1.500 9L7 3.500 12.500 9" fill="none" stroke="#fff" strokeWidth="1.300" /></svg></TrayIcon>
          <TrayIcon $ml={9}>
            <svg width="17" height="14" viewBox="0 0 17 14" fill="none" stroke="#fff" strokeWidth="1.100"><path d="M7 4h7.500v7H5V9.500M14.500 6h1.500v3h-1.500" /><path d="M1 3h5v3q0 2-2.500 2T1 6zM2.200 1v2M4.800 1v2M3.500 8v3.500" /></svg>
          </TrayIcon>
          <TrayIcon $ml={7}>
            <svg width="17" height="15" viewBox="0 0 17 15" fill="none" stroke="#fff" strokeWidth="1.100"><path d="M6 2.500h10v7.500H4.500V7M10 10v3M6 13.500h8" /><path d="M.8 1.500h4v4h-4zM2.800 5.500v8.500" /></svg>
          </TrayIcon>
          <TrayIcon $ml={7}>
            <svg width="18" height="14" viewBox="0 0 18 14" fill="none" stroke="#fff" strokeWidth="1.100"><path d="M1 5h2l3.500-3v10L3 9H1zM9 5q1 2 0 4M11.500 3.500q2 3.500 0 7M14 2q3 5 0 10" /></svg>
          </TrayIcon>
          <TrayIcon $ml={6}>
            <svg width="17" height="17" viewBox="0 0 17 17">
              <path d="M7 1l6.500 2v5q0 5-6.500 7.500Q.5 13 .5 8V3z" fill="#fff" /><path d="M7 1v14.500M.5 8h13" stroke="#25221a" strokeWidth="1.200" />
              <rect x="8" y="8" width="8.500" height="8.500" rx="1" fill="#d8202c" /><path d="M10 10l4.500 4.500M14.500 10L10 14.500" stroke="#fff" strokeWidth="1.200" />
            </svg>
          </TrayIcon>
          <TrayText $w={24} $ml={9} $size={12}>ENG</TrayText>
          <Clock>11:50 AM<br />11-04-2023</Clock>
          <TrayIcon $ml={18}>
            <svg width="16" height="17" viewBox="0 0 16 17"><path d="M0 1h16v12H9l-4 4v-4H0z" fill="#fff" /><path d="M3 4h10M3 7h10M3 10h7" stroke="#25221a" /></svg>
            <Badge $x={7} $y={7}>7</Badge>
          </TrayIcon>
        </Tray>
        <PeekLine />
        <DesktopPeek />
      </Taskbar>
    </Screen>
  );
}
